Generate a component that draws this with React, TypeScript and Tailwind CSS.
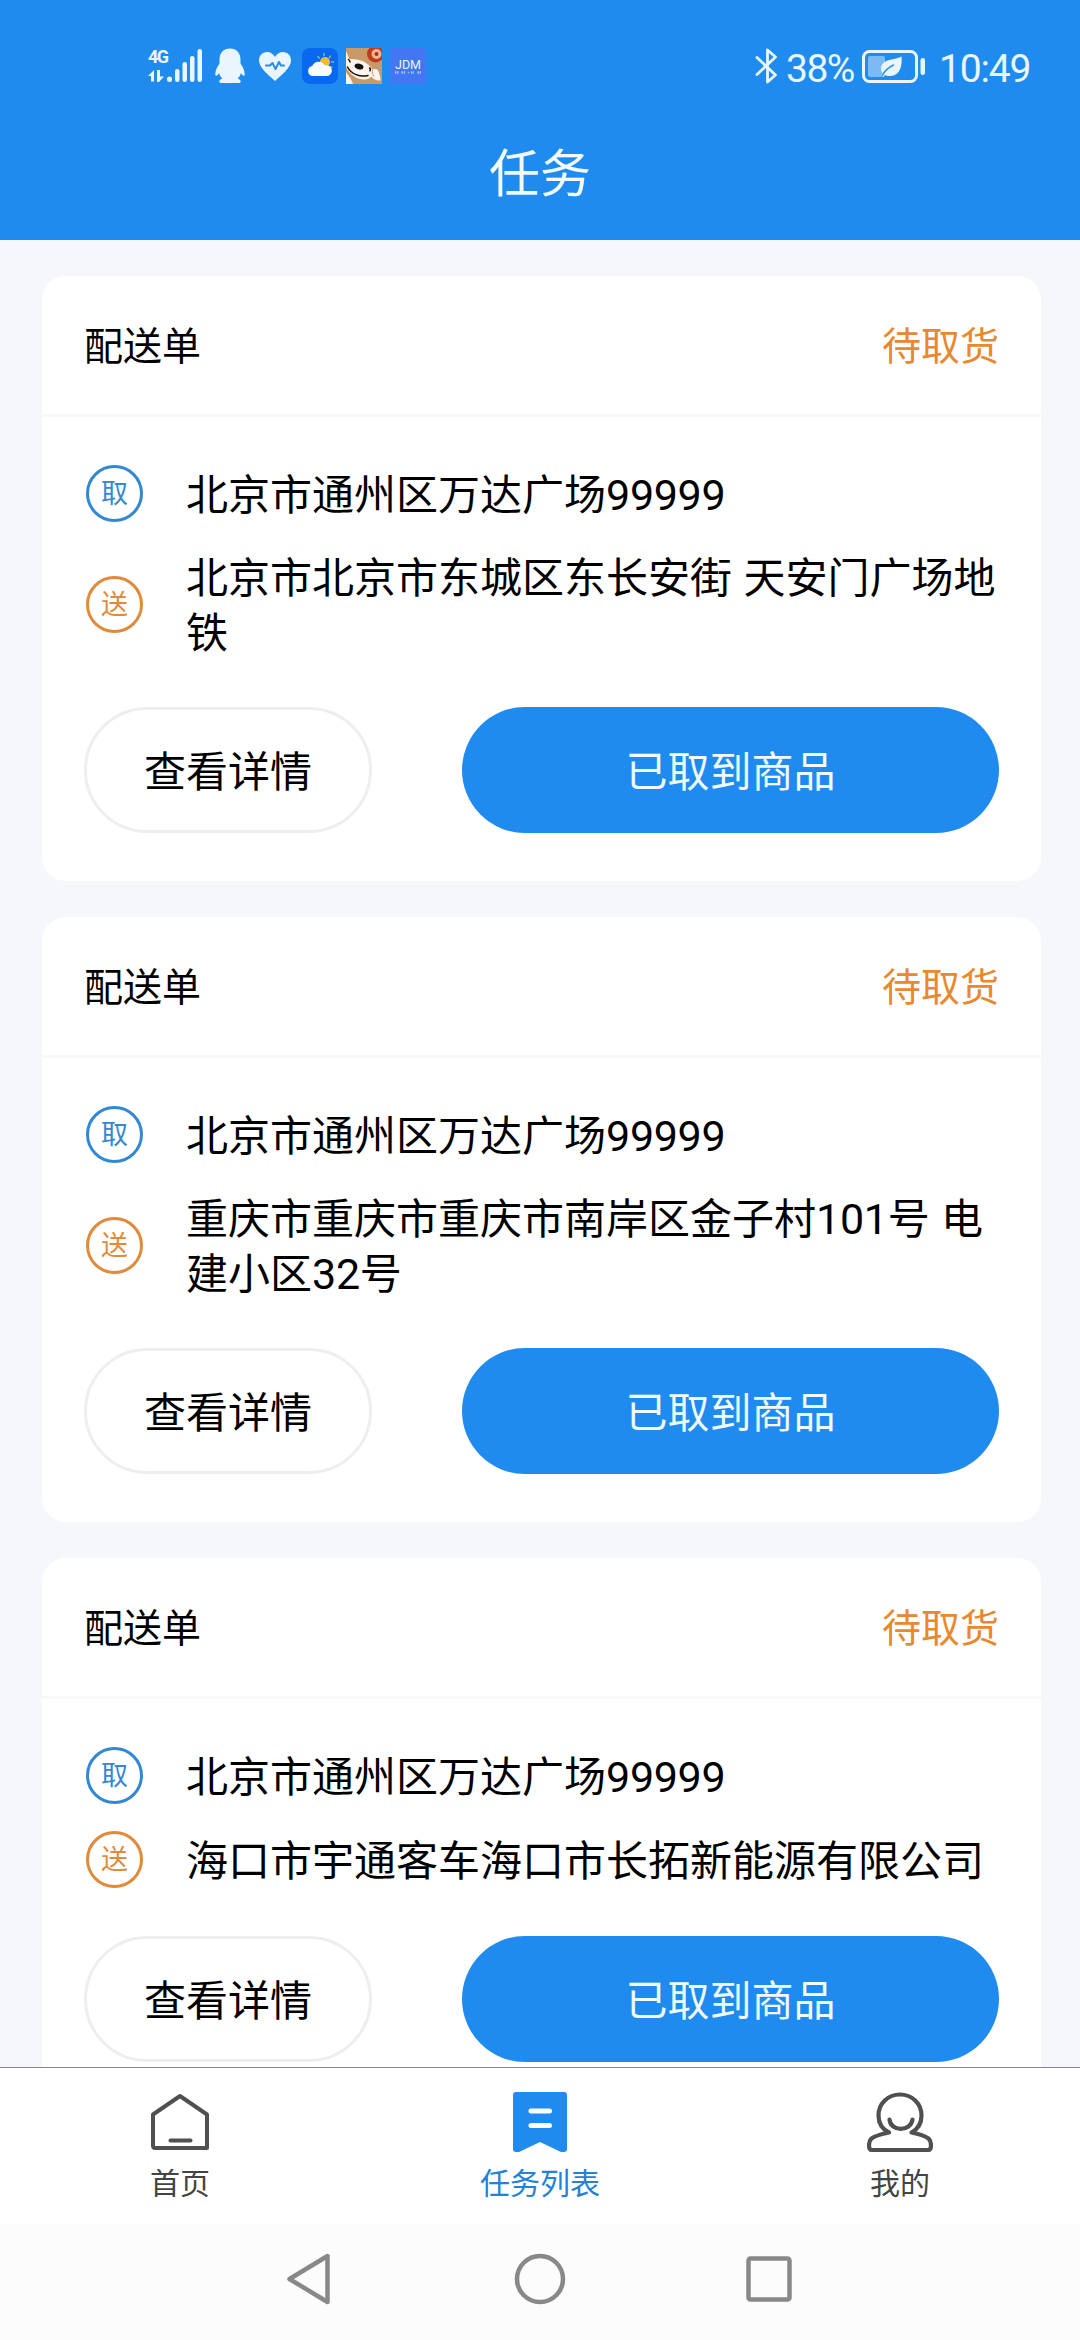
const tasks = [
  {
    id: 1,
    pickup: "北京市通州区万达广场99999",
    dropoff: "北京市北京市东城区东长安街 天安门广场地铁",
  },
  {
    id: 2,
    pickup: "北京市通州区万达广场99999",
    dropoff: "重庆市重庆市重庆市南岸区金子村101号 电建小区32号",
  },
  {
    id: 3,
    pickup: "北京市通州区万达广场99999",
    dropoff: "海口市宇通客车海口市长拓新能源有限公司",
  },
];

const SignalIcon = () => (
  <div className="flex items-end w-[54px] h-9">
    <div className="w-[19px] h-9 flex flex-col justify-between">
      <span className="h-[18px] font-['Roboto',sans-serif] font-bold text-[18px] leading-[18px] tracking-[-1.5px] whitespace-nowrap">4G</span>
      <svg className="w-[19px] h-[14px]" viewBox="0 0 19 14" fill="#eaf6ff">
        <path d="M6 0v11.500H3V6H0z M9 0h3v6.500h4L11 12H9z" />
      </svg>
    </div>
    <svg className="w-[35px] h-9" viewBox="18 0 35 36" fill="#eaf6ff">
      <rect x="18" y="28.500" width="5" height="5.500" rx="2.500" />
      <rect x="26" y="21" width="4.500" height="13" rx="2.200" />
      <rect x="33.500" y="14" width="4.500" height="20" rx="2.200" />
      <rect x="41" y="8" width="4.500" height="26" rx="2.200" />
      <rect x="48.500" y="1" width="4.500" height="33" rx="2.200" />
    </svg>
  </div>
);

const PenguinIcon = () => (
  <svg className="w-[30px] h-9" viewBox="0 0 30 36" fill="#eaf6ff">
    <path d="M15 0.500C8.500 0.500 4.500 5 4.500 11.500v4C2 19 0.300 22.500 0.300 26c0 2.500 1.500 2.500 3.800-1 .6 2.500 1.600 4 3.200 5.500-2 .8-3 1.800-3 3 0 1.200 1 1.500 3 1.500h15.400c2 0 3-.3 3-1.500s-1-2.200-3-3c1.600-1.500 2.600-3 3.200-5.500 2.300 3.500 3.800 3.500 3.800 1 0-3.500-1.700-7-4.200-10.500v-4C25.500 5 21.500.5 15 .5z" />
  </svg>
);

const HeartIcon = () => (
  <svg className="w-[34px] h-9" viewBox="0 0 34 36">
    <path d="M17 33C11 27.500 1 20 1 12.500 1 7.500 4.500 4 9 4c3.500 0 6.500 2 8 5 1.500-3 4.500-5 8-5 4.500 0 8 3.500 8 8.500C33 20 23 27.500 17 33z" fill="#eaf6ff" />
    <path d="M8 17.500h4l2.500-2.500 3 6 3.500-7 2 3.500h3" fill="none" stroke="#2a8ae6" strokeWidth="2" strokeLinecap="round" strokeLinejoin="round" />
  </svg>
);

const WeatherIcon = () => (
  <svg className="w-9 h-9" viewBox="0 0 36 36">
    <rect width="36" height="36" rx="8" fill="#0868ef" />
    <g stroke="#7fbf9c" strokeWidth="1.400" strokeLinecap="round">
      <path d="M22 5.500v2M28.500 8l-1.300 1.700M31.500 14h-2M30 19.500l-1.500-1M16 8.500l1.200 1.500" />
    </g>
    <circle cx="23" cy="14" r="5" fill="#f4bb31" />
    <path d="M11 28a5 5 0 0 1-.8-9.900 7 7 0 0 1 12.600-.6A5.400 5.400 0 1 1 24 28z" fill="#f8fbff" />
  </svg>
);

const DogIcon = () => (
  <svg className="w-9 h-9" viewBox="0 0 36 36">
    <rect width="36" height="36" fill="#c89a68" />
    <circle cx="29.500" cy="6" r="8.500" fill="#c23a1e" />
    <circle cx="30.500" cy="6" r="5" fill="#e8b78d" />
    <circle cx="30.500" cy="6" r="2" fill="#b52e18" />
    <path d="M0 3c1.500 2 2 5 3 8 7 0 13 1 17 4 3 2 5 4 6.500 6.500 3-1 5-.5 6 2 1.200 3 2 6 2 9-4 .5-7-1-9-4-2 2-4 3-7 3C11 31.500 4 27 0 19z" fill="#fdf4ec" />
    <path d="M0 24c2 3 5 6 7 12H0z" fill="#fdf4ec" />
    <ellipse cx="13" cy="18.500" rx="4.500" ry="2.800" transform="rotate(15 13 18.500)" fill="#131010" />
    <path d="M2.500 11.500c.8.600 1.500 1.500 1.500 2.500M23.500 20c1 .6 1 1.800.4 2.800M1.500 19C5 26 14 29.500 22 27.500" fill="none" stroke="#131010" strokeWidth="1.500" strokeLinecap="round" />
    <path d="M26.500 21.500c-.5 3 0 5 1.500 7" fill="none" stroke="#c79b74" strokeWidth="1" />
  </svg>
);

const JdmIcon = () => (
  <svg className="w-9 h-9" viewBox="0 0 36 36">
    <rect width="36" height="36" rx="1.500" fill="#4276f2" />
    <text x="5" y="20.500" fontSize="13" textLength="26" lengthAdjust="spacingAndGlyphs" fill="#eef4ff" fontFamily="Roboto, sans-serif">
      JDM
    </text>
    <path d="M5 24.500h3.500M11.500 24.500h4M21 24.500h3M27.500 24.500h3.500" stroke="#a9c3ff" strokeWidth="2.500" strokeDasharray="1.500 0.700" />
    <circle cx="18.500" cy="24.500" r="0.800" fill="#a9c3ff" />
  </svg>
);

const BluetoothIcon = () => (
  <svg className="w-6 h-9" viewBox="0 0 24 36" fill="none" stroke="#eaf6ff" strokeWidth="2.800" strokeLinecap="round" strokeLinejoin="round">
    <path d="M2 9.500L20.500 27 12.500 34V2l8 7L2 26.500" />
  </svg>
);

const BatteryIcon = () => (
  <svg className="w-16 h-9" viewBox="0 0 64 36">
    <rect x="1.500" y="3.500" width="53" height="30" rx="6" fill="none" stroke="#eaf6ff" strokeWidth="3" />
    <rect x="6" y="8" width="17" height="21" rx="2" fill="#7bbaf5" />
    <rect x="58.500" y="10" width="4.500" height="17" rx="2.200" fill="#eaf6ff" />
    <path d="M39.500 8.500c.8 9-1 18.500-10.500 19.500-3 .3-5-.3-6.200-1.300-.8 1-1.400 2-1.800 2.300l-2-1c.3-1 1-2 1.500-3-4-6 .5-11.500 6.500-13 5-1.200 9-1.500 12.500-3.500z" fill="#eaf6ff" />
    <path d="M20 28c2.500-5 6-8.500 11.500-11" fill="none" stroke="#2f8fea" strokeWidth="1.500" strokeLinecap="round" />
  </svg>
);

const StatusBar = () => (
  <div className="flex items-center justify-between h-[132px] pl-[148px] pr-[50px] text-[#eaf6ff]">
    <div className="flex items-center">
      <SignalIcon />
      <div className="flex items-center ml-[12.500px]">
        <PenguinIcon />
      </div>
      <div className="flex items-center ml-[13px] gap-[10px]">
        <HeartIcon />
        <div className="flex gap-2">
          <WeatherIcon />
          <DogIcon />
          <JdmIcon />
        </div>
      </div>
    </div>
    <div className="flex items-center font-['Roboto',sans-serif] text-[39px] leading-9">
      <BluetoothIcon />
      <span className="ml-[7px] mt-[5px] w-[69px] tracking-[-1.5px]">38%</span>
      <div className="ml-[7px]">
        <BatteryIcon />
      </div>
      <span className="ml-[13px] mt-[5px] w-[91px] tracking-[-1.2px]">10:49</span>
    </div>
  </div>
);

const Address = ({ label, text, color }: { label: string; text: string; color: string }) => (
  <div className="flex items-center">
    <div className={`flex items-center justify-center shrink-0 w-[57px] h-[57px] ml-[2px] rounded-full border-[3px] text-[27px] leading-none ${color}`}>
      <span className="-mt-1">{label}</span>
    </div>
    <p className="ml-[43px] flex-1 -mt-[2px] mb-[2px] text-[42px] leading-[55px] [word-spacing:2px]">
      {text.split(/(\d+)/).map((part, i) =>
        /^\d+$/.test(part) ? (
          <span key={i} className="font-['Roboto',sans-serif] text-[43px] leading-none tracking-[-0.3px]">
            {part}
          </span>
        ) : (
          part
        )
      )}
    </p>
  </div>
);

const TaskCard = ({ pickup, dropoff }: { pickup: string; dropoff: string }) => (
  <div className="shrink-0 rounded-[24px] bg-white">
    <div className="flex items-center justify-between h-[141px] px-[42px] pb-[3px] border-b-[3px] border-[#f8f8f8] text-[39px]">
      <span>配送单</span>
      <span className="text-[#e8882f]">待取货</span>
    </div>
    <div className="px-[42px] pt-12 pb-12">
      <div className="flex flex-col gap-[27px]">
        <Address label="取" text={pickup} color="border-[#3388d4] text-[#3388d4]" />
        <Address label="送" text={dropoff} color="border-[#e08a3a] text-[#e08a3a]" />
      </div>
      <div className="flex justify-between mt-12 text-[42px]">
        <button className="w-[288px] h-[126px] pb-[3px] rounded-full border-[3px] border-[#eeeeee] bg-white">查看详情</button>
        <button className="w-[537px] h-[126px] pb-[3px] rounded-full bg-[#1f8bee] text-[#f0faff]">已取到商品</button>
      </div>
    </div>
  </div>
);

const HomeIcon = () => (
  <svg className="w-[60px] h-[60px]" viewBox="0 0 60 60" fill="none" stroke="#505050" strokeWidth="4" strokeLinejoin="round">
    <path d="M30 4L57 22.500V56H5.500Q3 56 3 53.500V22.500z" />
    <path d="M20.500 48.500h20" strokeLinecap="round" />
  </svg>
);

const TaskIcon = () => (
  <svg className="w-[60px] h-[60px]" viewBox="0 0 60 60">
    <path d="M6 0h48q3 0 3 3v54q0 3-3 3h-3L30 50 9 60H6q-3 0-3-3V3q0-3 3-3z" fill="#1f8bee" />
    <path d="M21 19h18.500M21 33.500h18.500" stroke="#fff" strokeWidth="5" strokeLinecap="round" />
  </svg>
);

const UserIcon = () => (
  <svg className="w-[66px] h-[60px]" viewBox="0 0 66 60" fill="none" stroke="#505050" strokeWidth="4.200" strokeLinejoin="round" strokeLinecap="round">
    <path d="M22 40.500C15 37 11.500 30.500 11.500 23.500 11.500 11.500 21 2.500 33 2.500s21.500 9 21.500 21c0 7-3.500 13.500-10 17 6 1.200 12 2.500 17 6 2 1.500 2.500 4 2.500 7 0 3-1 4.500-3 4.500H5c-2 0-3-1.500-3-4.500s.5-5.500 2.500-7c5-3.500 11.500-4.800 17.500-6z" />
    <path d="M22.500 27.500c1 12.500 21.500 12.500 23 0" />
  </svg>
);

const TabBar = () => (
  <nav className="shrink-0 grid grid-cols-3 h-[157px] border-t border-[#888888] bg-white text-[30px] leading-[44px] text-[#444444]">
    <a className="flex flex-col items-center pt-6">
      <HomeIcon />
      <span className="mt-[7px]">首页</span>
    </a>
    <a className="flex flex-col items-center pt-6 text-[#2182d8]">
      <TaskIcon />
      <span className="mt-[7px]">任务列表</span>
    </a>
    <a className="flex flex-col items-center pt-6">
      <UserIcon />
      <span className="mt-[7px]">我的</span>
    </a>
  </nav>
);

const SystemNav = () => (
  <div className="shrink-0 h-[116px] bg-[#fcfcfc]">
    <svg className="w-full h-full" viewBox="0 0 1080 116" fill="none" stroke="#888888" strokeWidth="4.500" strokeLinejoin="round">
      <path d="M327.500 32v46L289.500 55z" />
      <circle cx="540" cy="55" r="23" />
      <rect x="748.500" y="34.500" width="41" height="41" rx="2" />
    </svg>
  </div>
);

const App = () => {
  return (
    <div
      lang="zh-CN"
      className="flex flex-col w-[1080px] h-[2340px] overflow-hidden bg-[#f6f7fb] text-black font-['Noto_Sans_CJK_SC',sans-serif]"
    >
      {/* Header */}
      <header className="shrink-0 h-[240px] bg-[#1f8bee]">
        <StatusBar />
        <h1 className="text-center text-[51px] leading-[76px] text-[#f0faff]">任务</h1>
      </header>

      {/* Task list, last card runs under the tab bar */}
      <main className="flex-1 min-h-0 overflow-hidden flex flex-col gap-9 pt-9 pl-[42px] pr-[39px]">
        {tasks.map((task) => (
          <TaskCard key={task.id} pickup={task.pickup} dropoff={task.dropoff} />
        ))}
      </main>

      <TabBar />
      <SystemNav />
    </div>
  );
};

export default App;
